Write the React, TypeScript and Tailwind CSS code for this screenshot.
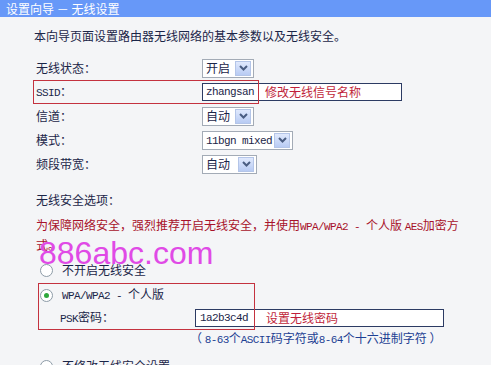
import React from 'react';

const L: React.FC<{ children: React.ReactNode }> = ({ children }) => (
  <span className="font-['Liberation_Mono',monospace] text-[11px] tracking-[-0.6px]">{children}</span>
);

const Select: React.FC<{ label: React.ReactNode; width: string }> = ({ label, width }) => (
  <div className={`flex h-[19px] items-center justify-between border border-[#a3abb6] bg-white pl-[3px] pr-[2px] ${width}`}>
    <span className="leading-none">{label}</span>
    <span className="flex h-[15px] w-[16px] items-center justify-center border border-[#b4c5e8] bg-gradient-to-b from-[#e0e9fd] to-[#b8cbf3]">
      <svg width="9" height="6" viewBox="0 0 9 6">
        <path d="M1 1l3.5 3.5L8 1" stroke="#4a5d82" strokeWidth="2" fill="none" />
      </svg>
    </span>
  </div>
);

const Radio: React.FC<{ checked?: boolean }> = ({ checked }) => (
  <span className="flex h-[13px] w-[13px] shrink-0 items-center justify-center rounded-full border border-[#8d9ba7] bg-white">
    {checked && <span className="h-[5px] w-[5px] rounded-full bg-[#2ea83c]" />}
  </span>
);

const App: React.FC = () => {
  const rows: { label: React.ReactNode; control: React.ReactNode }[] = [
    { label: '无线状态：', control: <Select label="开启" width="w-[52px]" /> },
    {
      label: <><L>SSID</L>：</>,
      control: (
        <div className="flex h-[18px] w-[200px] items-center border border-[#2c3b63] bg-white pl-[3px] leading-none">
          <L>zhangsan</L>
          <span className="ml-[11px] text-[#c01f3a]">修改无线信号名称</span>
        </div>
      ),
    },
    { label: '信道：', control: <Select label="自动" width="w-[52px]" /> },
    { label: '模式：', control: <Select label={<L>11bgn mixed</L>} width="w-[91px]" /> },
    { label: '频段带宽：', control: <Select label="自动" width="w-[55px]" /> },
  ];

  return (
    <div className="relative h-[365px] w-[491px] overflow-hidden bg-[#f4f5f7] font-['Noto_Sans_CJK_SC',sans-serif] text-[12px] text-[#1b2548]">
      <div className="flex h-[17px] items-center bg-[#6798f8] pl-[6px] leading-none text-white">设置向导 － 无线设置</div>

      <p className="ml-[34px] mt-[11px] h-[16px] leading-[16px]">本向导页面设置路由器无线网络的基本参数以及无线安全。</p>

      <div className="mt-[12px] pl-[36px]">
        {rows.map((row, i) => (
          <div key={i} className="flex h-[24px] items-center">
            <span className="w-[166px] leading-none">{row.label}</span>
            {row.control}
          </div>
        ))}
      </div>

      <p className="ml-[36px] mt-[16px] h-[16px] leading-[16px]">无线安全选项：</p>
      <p className="ml-[36px] mt-[8px] leading-[17px] text-[#a8122a]">
        为保障网络安全，强烈推荐开启无线安全，并使用<L>WPA/WPA2 - </L>个人版 <L>AES</L>加密方
        <br />
        式。
      </p>

      <div className="mt-[9px] flex h-[16px] items-center pl-[40px]">
        <Radio />
        <span className="ml-[9px] leading-none">不开启无线安全</span>
      </div>

      <div className="mt-[8px] pt-[1px]">
        <div className="flex h-[16px] items-center pl-[40px]">
          <Radio checked />
          <span className="ml-[9px] leading-none"><L>WPA/WPA2 - </L>个人版</span>
        </div>
        <div className="mt-[6px] flex h-[18px] items-center pl-[60px]">
          <span className="w-[135px] leading-none"><L>PSK</L>密码：</span>
          <div className="flex h-[18px] w-[249px] items-center border border-[#2c3b63] bg-white pl-[4px] leading-none">
            <L>1a2b3c4d</L>
            <span className="ml-[18px] text-[#c01f3a]">设置无线密码</span>
          </div>
        </div>
        <p className="mt-[2px] h-[17px] pl-[190px] leading-[17px] text-[#1d3f93]">
          （ <L>8-63</L>个<L>ASCII</L>码字符或<L>8-64</L>个十六进制字符 ）
        </p>
      </div>

      <div className="mt-[12px] flex h-[16px] items-center pl-[40px]">
        <Radio />
        <span className="ml-[9px] leading-none">不修改无线安全设置</span>
      </div>

      {/* annotation frames */}
      <div className="absolute left-[33px] top-[80px] h-[24px] w-[226px] border border-[#c4323f]" />
      <div className="absolute left-[38px] top-[283px] h-[47px] w-[217px] border border-[#c4323f]" />

      {/* watermark */}
      <div className="absolute left-[39px] top-[237px] font-['Liberation_Sans',Arial,sans-serif] text-[32px] leading-none text-[#e04ae6]">
        886abc.com
      </div>
    </div>
  );
};

export default App;
